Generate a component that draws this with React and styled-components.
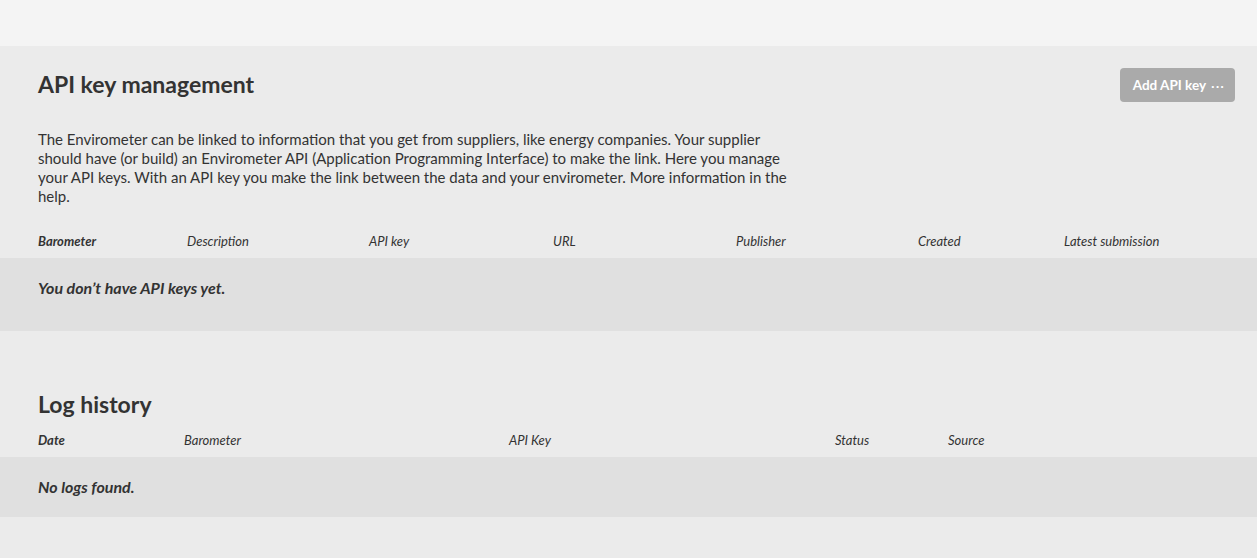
import React from 'react';
import styled, { createGlobalStyle } from 'styled-components';

const GlobalStyle = createGlobalStyle`
  html, body {
    margin: 0;
    padding: 0;
    background: #ebebeb;
  }
  body {
    font-family: Lato, "Open Sans", "Liberation Sans", sans-serif;
    color: #333333;
  }
`;

const TopBar = styled.div`
  height: 46px;
  background: #f4f4f4;
`;

const Page = styled.main`
  background: #ebebeb;
  padding-top: 22px;
  padding-bottom: 41px;
`;

const Section = styled.section`
  margin-bottom: ${p => p.$gap || 0}px;
`;

const HeaderRow = styled.div`
  display: flex;
  justify-content: space-between;
  align-items: flex-start;
  padding: 0 22px 0 38px;
`;

const Title = styled.h2`
  margin: ${p => p.$top || 0}px 0 0;
  font-size: 23px;
  font-weight: 700;
  line-height: 30px;
  color: #333333;
`;

const AddButton = styled.button`
  display: flex;
  align-items: center;
  gap: 5px;
  height: 34px;
  padding: 0 10px 0 13px;
  border: none;
  border-radius: 4px;
  background: #aaaaaa;
  color: #ffffff;
  font-family: inherit;
  font-size: 13.5px;
  font-weight: 700;
  cursor: pointer;
`;

const Dots = styled.span`
  font-weight: 400;
  letter-spacing: 1px;
  font-size: 14px;
`;

const Intro = styled.p`
  margin: 28px 0 0 38px;
  max-width: 760px;
  font-size: 15px;
  line-height: 19px;
`;

const TableHead = styled.div`
  display: grid;
  grid-template-columns: ${p => p.$cols};
  align-items: center;
  height: 34px;
  margin-top: ${p => p.$top || 0}px;
  padding-left: 38px;
`;

const HeadCell = styled.span`
  font-size: 13px;
  font-style: italic;
  font-weight: ${p => (p.$strong ? 700 : 400)};
  white-space: nowrap;
`;

const EmptyRow = styled.div`
  box-sizing: border-box;
  height: ${p => p.$h}px;
  padding: 20px 0 0 38px;
  background: #e0e0e0;
  font-size: 16px;
  line-height: 20px;
  font-style: italic;
  font-weight: 700;
`;

const keyCols = ['Barometer', 'Description', 'API key', 'URL', 'Publisher', 'Created', 'Latest submission'];
const logCols = ['Date', 'Barometer', 'API Key', 'Status', 'Source'];

export default function App() {
  return (
    <>
      <GlobalStyle />
      <TopBar />
      <Page>
        <Section $gap={56}>
          <HeaderRow>
            <Title $top={1}>API key management</Title>
            <AddButton>
              Add API key <Dots>···</Dots>
            </AddButton>
          </HeaderRow>
          <Intro>
            The Envirometer can be linked to information that you get from suppliers, like energy companies. Your supplier
            should have (or build) an Envirometer API (Application Programming Interface) to make the link. Here you manage
            your API keys. With an API key you make the link between the data and your envirometer. More information in the
            help.
          </Intro>
          <TableHead $cols="149px 182px 184px 183px 182px 146px 1fr" $top={18}>
            {keyCols.map((c, i) => (
              <HeadCell key={c} $strong={i === 0}>{c}</HeadCell>
            ))}
          </TableHead>
          <EmptyRow $h={73}>You don’t have API keys yet.</EmptyRow>
        </Section>
        <Section>
          <HeaderRow>
            <Title $top={2}>Log history</Title>
          </HeaderRow>
          <TableHead $cols="146px 325px 326px 113px 1fr" $top={4}>
            {logCols.map((c, i) => (
              <HeadCell key={c} $strong={i === 0}>{c}</HeadCell>
            ))}
          </TableHead>
          <EmptyRow $h={60}>No logs found.</EmptyRow>
        </Section>
      </Page>
    </>
  );
}
